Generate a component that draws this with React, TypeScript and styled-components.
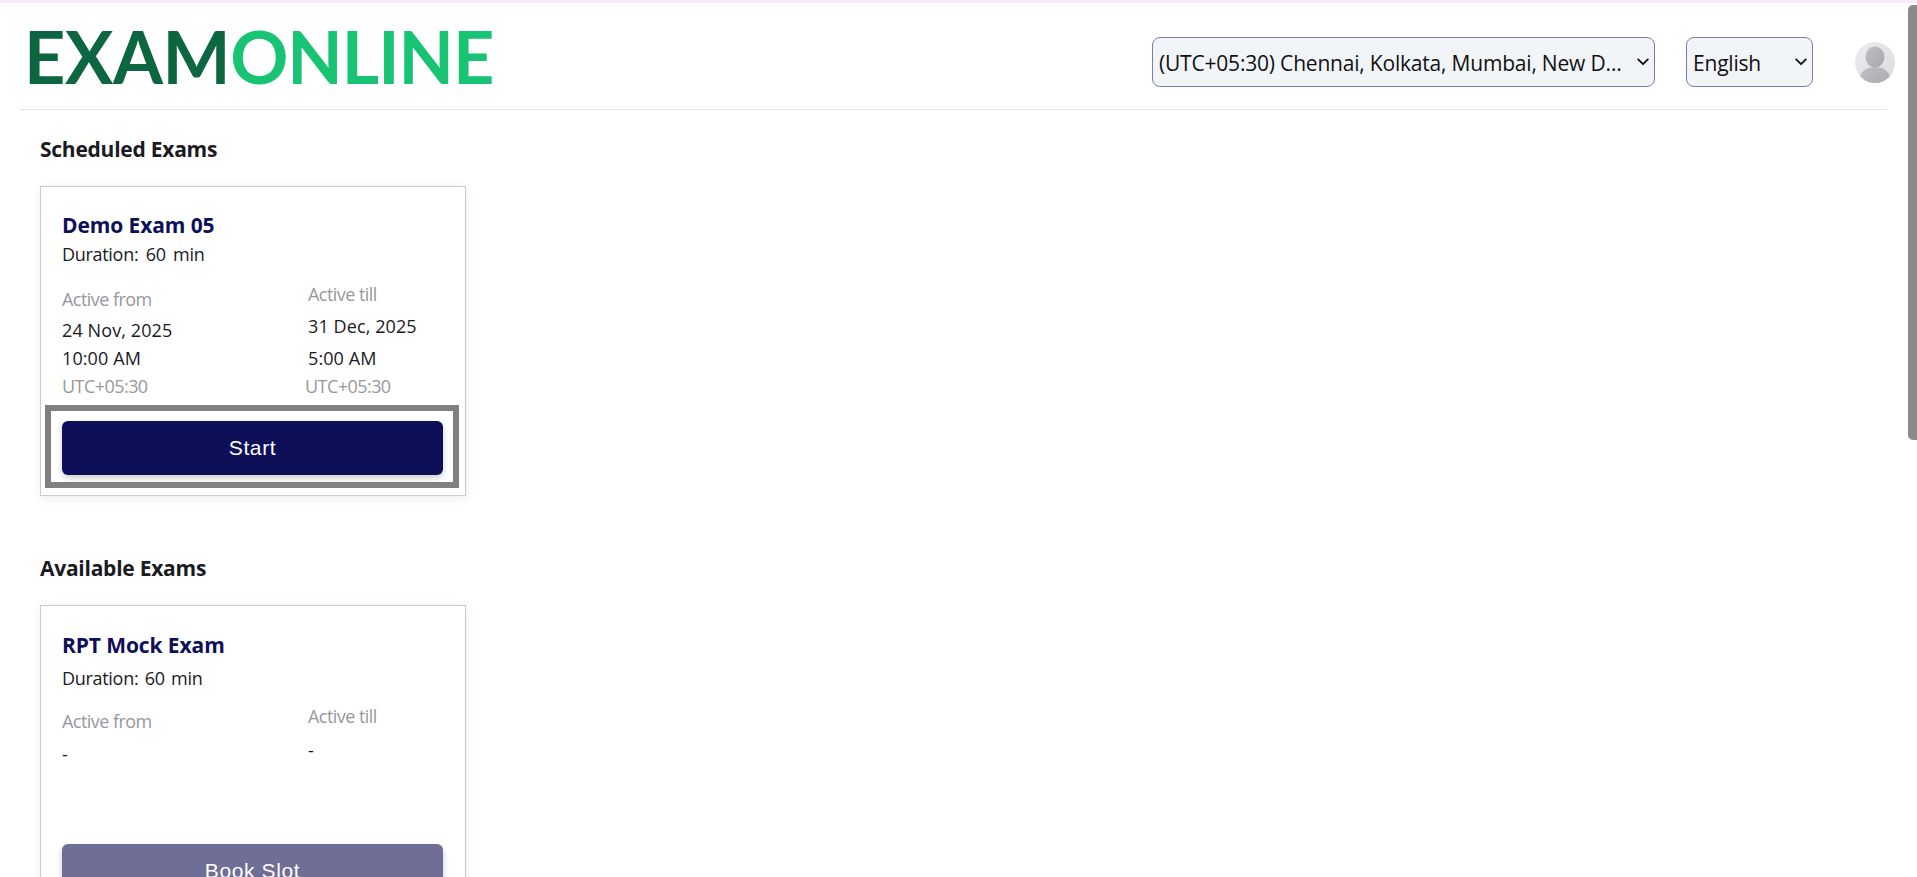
import React from "react";
import styled, { createGlobalStyle } from "styled-components";

const Global = createGlobalStyle`
  html, body { margin: 0; padding: 0; height: 100%; overflow: hidden; background: #fff; }
  body { font-family: "Open Sans", "Noto Sans", sans-serif; color: #1a1a1f; }
  * { box-sizing: border-box; }
`;

const Page = styled.div`
  position: relative;
  height: 877px;
  overflow: hidden;
  border-top: 3px solid #f9e9f9;
  padding: 0 30px 0 20px;
`;

const Header = styled.header`
  height: 107px;
  display: flex;
  align-items: flex-start;
  border-bottom: 1px solid #e4e4e6;
  padding: 0 0 0 4px;
`;

const Logo = styled.div`
  font-family: "Lato", sans-serif;
  font-size: 72px;
  line-height: 52px;
  font-weight: 700;
  margin-top: 27px;
  letter-spacing: -0.4px;
  white-space: nowrap;
  color: #0c6640;
`;

const LogoAccent = styled.span`
  color: #18c373;
  letter-spacing: -1px;
`;

const Controls = styled.div`
  margin-left: auto;
  display: flex;
  align-items: flex-start;
  margin-top: 34px;
`;

const SelectWrap = styled.div<{ $w: number; $gap: number }>`
  position: relative;
  width: ${(p) => p.$w}px;
  margin-right: ${(p) => p.$gap}px;
`;

const Select = styled.select`
  appearance: none;
  display: block;
  width: 100%;
  height: 50px;
  background-color: #f2f5f8;
  border: 1px solid #7c7ca8;
  border-radius: 8px;
  padding: 2px 30px 0 6px;
  font-family: "Open Sans", sans-serif;
  font-size: 21px;
  letter-spacing: -0.2px;
  color: #111;
  text-overflow: ellipsis;
  white-space: nowrap;
`;

const Chevron = styled.svg`
  position: absolute;
  right: 6px;
  top: 21px;
  width: 12px;
  height: 8px;
  pointer-events: none;
`;

const Avatar = styled.svg`
  display: block;
  width: 40px;
  height: 41px;
  margin-top: 5px;
  margin-right: -8px;
`;

const Section = styled.section<{ $top: number }>`
  padding-left: 20px;
  margin-top: ${(p) => p.$top}px;
`;

const SectionTitle = styled.h2`
  margin: 0;
  font-size: 21px;
  line-height: 28px;
  font-weight: 700;
  letter-spacing: -0.25px;
  color: #1a1a1f;
`;

const Card = styled.article`
  width: 426px;
  margin-top: 23px;
  background: #fff;
  border: 1.5px solid #cbcbcb;
  box-shadow: 0 2px 10px rgba(0, 0, 0, 0.08);
  padding: 24px 0 0;
`;

const CardBody = styled.div`
  padding-left: 21px;
`;

const ExamName = styled.h3<{ $top: number }>`
  margin: ${(p) => p.$top}px 0 0;
  font-size: 21px;
  line-height: 28px;
  font-weight: 700;
  letter-spacing: -0.1px;
  color: #0d0f59;
`;

const Duration = styled.p<{ $top: number; $space: number }>`
  margin: ${(p) => p.$top}px 0 0;
  font-size: 18px;
  line-height: 24px;
  letter-spacing: -0.3px;
  word-spacing: ${(p) => p.$space}px;
  color: #1a1a1f;
`;

const Dates = styled.div<{ $top: number }>`
  display: grid;
  grid-template-columns: 246px 1fr;
  margin-top: ${(p) => p.$top}px;
`;

const DateColumn = styled.div<{ $lift: number }>`
  margin-top: ${(p) => -p.$lift}px;
`;

const Label = styled.div`
  font-size: 18px;
  line-height: 24px;
  letter-spacing: -0.55px;
  color: #98989c;
`;

const Value = styled.div<{ $top: number }>`
  margin-top: ${(p) => p.$top}px;
  font-size: 18px;
  line-height: 24px;
  letter-spacing: 0.1px;
  color: #1a1a1f;
`;

const Zone = styled.div<{ $shift?: number }>`
  margin: 4px 0 0 ${(p) => p.$shift ?? 0}px;
  font-size: 18px;
  line-height: 24px;
  letter-spacing: -0.55px;
  color: #98989c;
`;

const FocusRing = styled.div`
  margin: 7px 6px 7px 4px;
  border: 6px solid #808080;
  padding: 10px 10px 7px 11px;
`;

const PlainAction = styled.div`
  padding: 0 22px 20px 21px;
  margin-top: 78px;
`;

const ActionButton = styled.button<{ $muted?: boolean }>`
  display: block;
  width: 100%;
  height: 54px;
  border: 0;
  border-radius: 6px;
  background: ${(p) => (p.$muted ? "#6e6e96" : "#0d0f59")};
  box-shadow: 0 3px 6px rgba(0, 0, 0, 0.2);
  color: #fff;
  font-family: "Liberation Sans", Arial, sans-serif;
  font-size: 21px;
  letter-spacing: 0.6px;
`;

const Scrollbar = styled.div`
  position: absolute;
  top: 2px;
  right: 0;
  width: 9px;
  height: 435px;
  background: #8a8a8a;
  border-radius: 5px 0 0 5px;
`;

function ChevronIcon() {
  return (
    <Chevron viewBox="0 0 12 8" aria-hidden="true">
      <path d="M1.2 1.4 L6 6.2 L10.8 1.4" fill="none" stroke="#111" strokeWidth="1.8" strokeLinecap="round" strokeLinejoin="round" />
    </Chevron>
  );
}

export default function App() {
  return (
    <>
      <Global />
      <Page>
        <Header>
          <Logo>
            EXAM<LogoAccent>ONLINE</LogoAccent>
          </Logo>
          <Controls>
            <SelectWrap $w={503} $gap={31}>
              <Select defaultValue="ist">
                <option value="ist">(UTC+05:30) Chennai, Kolkata, Mumbai, New Delhi</option>
              </Select>
              <ChevronIcon />
            </SelectWrap>
            <SelectWrap $w={127} $gap={42}>
              <Select defaultValue="en">
                <option value="en">English</option>
              </Select>
              <ChevronIcon />
            </SelectWrap>
            <Avatar viewBox="0 0 40 41" aria-hidden="true">
              <defs>
                <linearGradient id="avatarBg" x1="0" y1="0" x2="1" y2="1">
                  <stop offset="0" stopColor="#ececee" />
                  <stop offset="1" stopColor="#dcdce0" />
                </linearGradient>
                <linearGradient id="avatarFg" x1="0" y1="0" x2="1" y2="1">
                  <stop offset="0" stopColor="#bdbdc3" />
                  <stop offset="1" stopColor="#a9a9b0" />
                </linearGradient>
                <clipPath id="avatarClip">
                  <ellipse cx="20" cy="20.5" rx="20" ry="20.5" />
                </clipPath>
              </defs>
              <ellipse cx="20" cy="20.5" rx="20" ry="20.5" fill="url(#avatarBg)" />
              <g clipPath="url(#avatarClip)" fill="url(#avatarFg)">
                <ellipse cx="20" cy="15" rx="9.5" ry="10.5" />
                <ellipse cx="20" cy="36" rx="15" ry="11" />
              </g>
            </Avatar>
          </Controls>
        </Header>

        <Section $top={25}>
          <SectionTitle>Scheduled Exams</SectionTitle>
          <Card>
            <CardBody>
              <ExamName $top={0}>Demo Exam 05</ExamName>
              <Duration $top={3} $space={3}>Duration: 60 min</Duration>
              <Dates $top={21}>
                <DateColumn $lift={0}>
                  <Label>Active from</Label>
                  <Value $top={7}>24 Nov, 2025</Value>
                  <Value $top={4}>10:00 AM</Value>
                  <Zone>UTC+05:30</Zone>
                </DateColumn>
                <DateColumn $lift={5}>
                  <Label>Active till</Label>
                  <Value $top={8}>31 Dec, 2025</Value>
                  <Value $top={8}>5:00 AM</Value>
                  <Zone $shift={-3}>UTC+05:30</Zone>
                </DateColumn>
              </Dates>
            </CardBody>
            <FocusRing>
              <ActionButton>Start</ActionButton>
            </FocusRing>
          </Card>
        </Section>

        <Section $top={58}>
          <SectionTitle>Available Exams</SectionTitle>
          <Card>
            <CardBody>
              <ExamName $top={1}>RPT Mock Exam</ExamName>
              <Duration $top={7} $space={2}>Duration: 60 min</Duration>
              <Dates $top={19}>
                <DateColumn $lift={0}>
                  <Label>Active from</Label>
                  <Value $top={9}>-</Value>
                </DateColumn>
                <DateColumn $lift={5}>
                  <Label>Active till</Label>
                  <Value $top={10}>-</Value>
                </DateColumn>
              </Dates>
            </CardBody>
            <PlainAction>
              <ActionButton $muted>Book Slot</ActionButton>
            </PlainAction>
          </Card>
        </Section>
        <Scrollbar />
      </Page>
    </>
  );
}
